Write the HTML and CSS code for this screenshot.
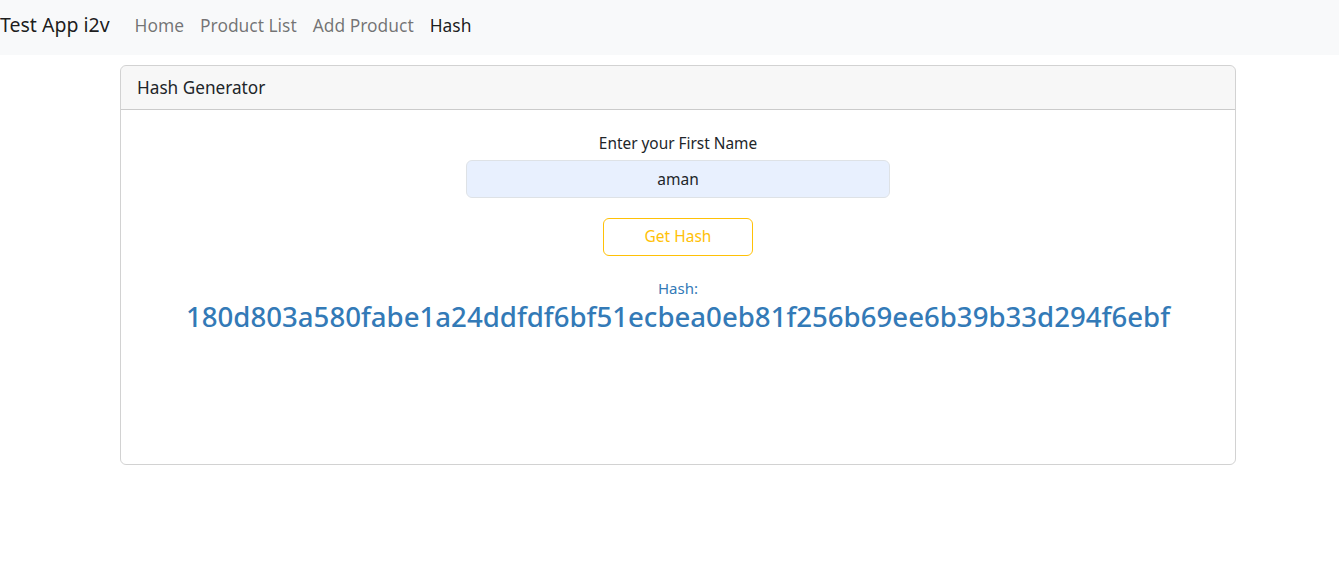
FILE: index.html
```html
<!DOCTYPE html>
<html lang="en">
<head>
<meta charset="utf-8">
<title>Test App i2v</title>
<link rel="stylesheet" href="styles.css">
</head>
<body>
<nav class="navbar">
  <a class="brand" href="#">Test App i2v</a>
  <ul class="nav">
    <li><a class="nav-link" href="#">Home</a></li>
    <li><a class="nav-link" href="#">Product List</a></li>
    <li><a class="nav-link" href="#">Add Product</a></li>
    <li><a class="nav-link active" href="#">Hash</a></li>
  </ul>
</nav>
<main class="page">
  <section class="card">
    <header class="card-header">Hash Generator</header>
    <div class="card-body">
      <label class="label" for="fname">Enter your First Name</label>
      <input class="input" id="fname" type="text" value="aman">
      <button class="btn" type="button">Get Hash</button>
      <div class="hash-label">Hash:</div>
      <h3 class="hash">180d803a580fabe1a24ddfdf6bf51ecbea0eb81f256b69ee6b39b33d294f6ebf</h3>
    </div>
  </section>
</main>
</body>
</html>
```
FILE: styles.css
```css
* { box-sizing: border-box; }
html, body { margin: 0; padding: 0; }
body {
  font-family: "Noto Sans", "Open Sans", sans-serif;
  font-size: 16px;
  line-height: 1.5;
  color: #212529;
  background: #fff;
}
.navbar {
  display: flex;
  align-items: center;
  height: 55px;
  padding-bottom: 5px;
  background: #f8f9fa;
}
.brand {
  font-size: 19.5px;
  color: rgba(0,0,0,.9);
  text-decoration: none;
  margin-right: 17px;
}
.nav {
  display: flex;
  list-style: none;
  margin: 0;
  padding: 0;
}
.nav-link {
  display: block;
  padding: 8px 8px;
  font-size: 17.4px;
  color: rgba(0,0,0,.55);
  text-decoration: none;
}
.nav-link.active { color: rgba(0,0,0,.9); }
.page {
  display: flex;
  justify-content: center;
  padding: 10px 0 0 17px;
}
.card {
  width: 1116px;
  border: 1px solid rgba(0,0,0,.175);
  border-radius: 6px;
  overflow: hidden;
}
.card-header {
  height: 44px;
  padding: 0 16px;
  display: flex;
  align-items: center;
  font-size: 17.2px;
  background: rgba(0,0,0,.03);
  border-bottom: 1px solid rgba(0,0,0,.175);
}
.card-body {
  height: 354px;
  display: flex;
  flex-direction: column;
  align-items: center;
  padding-top: 22px;
}
.label {
  display: block;
  font-size: 15.4px;
  line-height: 24px;
  margin-bottom: 4px;
}
.input {
  width: 424px;
  height: 38px;
  border: 1px solid #dee2e6;
  border-radius: 6px;
  background: #e8f0fe;
  text-align: center;
  font: inherit;
  font-size: 15.5px;
  color: #212529;
  padding: 6px 12px;
}
.btn {
  margin-top: 20px;
  width: 150px;
  height: 38px;
  border: 1px solid #ffc107;
  border-radius: 6px;
  background: transparent;
  color: #ffc107;
  font: inherit;
  font-size: 15.5px;
}
.hash-label {
  margin-top: 20px;
  font-size: 15px;
  line-height: 24px;
  color: #337ab7;
}
.hash {
  margin: 0;
  font-size: 27.6px;
  font-weight: 500;
  line-height: 1.2;
  color: #337ab7;
}
```
